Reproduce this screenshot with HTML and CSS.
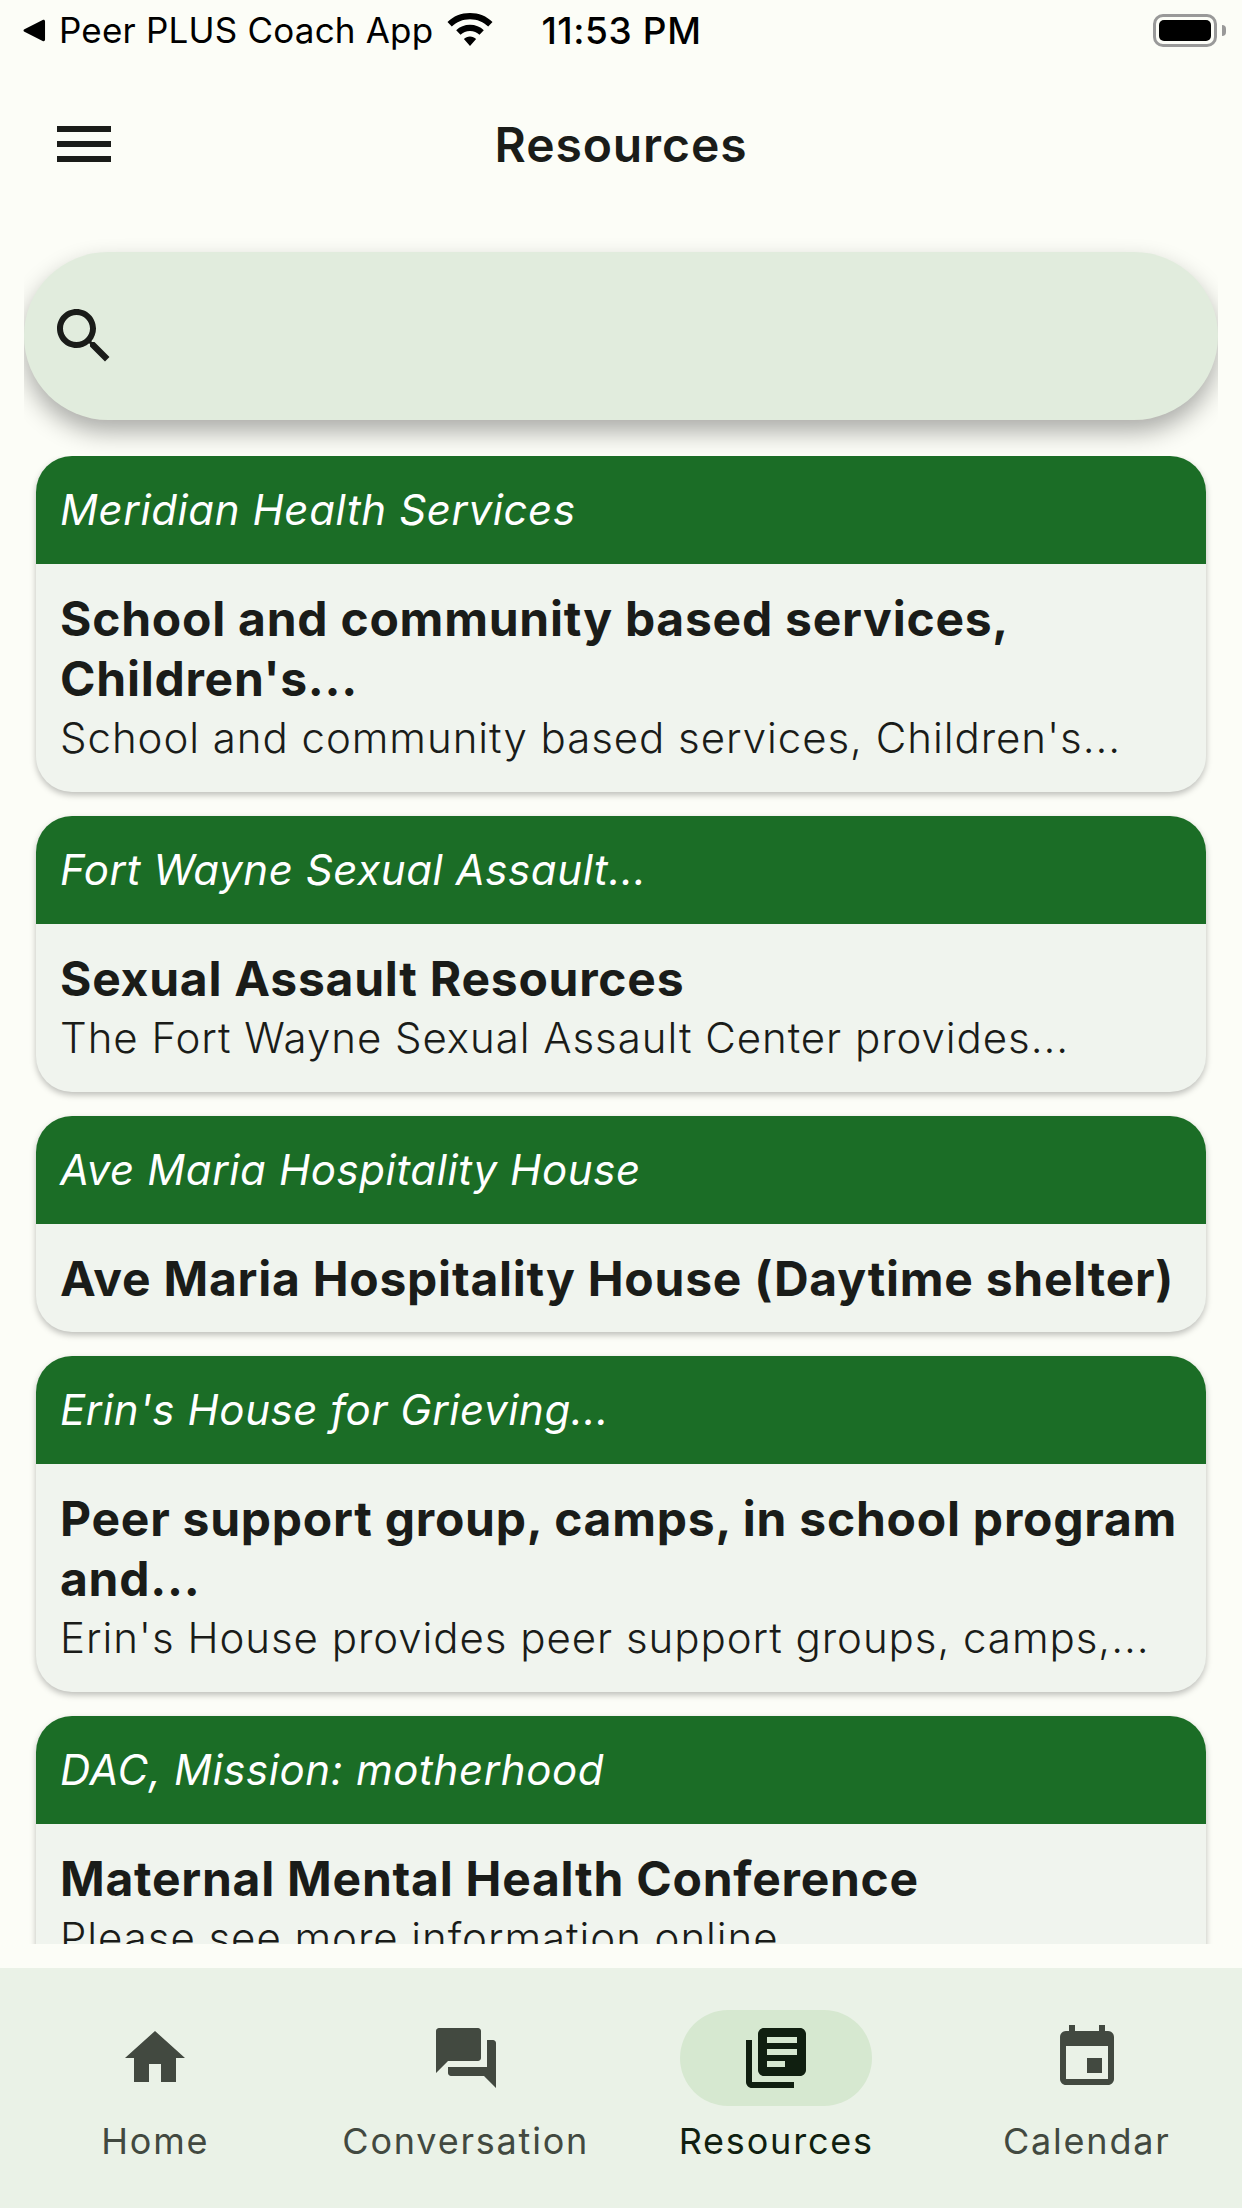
FILE: index.html
```html
<!DOCTYPE html>
<html lang="en">
<head>
  <meta charset="UTF-8">
  <meta name="viewport" content="width=device-width, initial-scale=1.0">
  <title>Resources - Peer PLUS Coach</title>
  <link rel="stylesheet" href="styles.css">
</head>
<body>
  <div class="status-bar">
    <svg class="status-back" viewBox="0 0 24 24"><path d="M23 2.500v19c0 1.500-1.300 2.200-2.500 1.500L1.500 13.300c-1.300-.7-1.300-1.900 0-2.600L20.500 1c1.200-.7 2.500 0 2.500 1.500z"/></svg>
    <span class="status-app">Peer PLUS Coach App</span>
    <svg class="status-wifi" viewBox="0 0 46 33"><path d="M23 0C14.200 0 6.300 3.300.5 8.900l4.300 4.700C9.500 9 15.900 6.300 23 6.300s13.500 2.700 18.200 7.300l4.300-4.700C39.700 3.300 31.800 0 23 0zM23 11.800c-5.300 0-10.200 2-13.800 5.400l4.300 4.600c2.500-2.400 5.800-3.800 9.500-3.800s7 1.400 9.500 3.800l4.300-4.600c-3.600-3.400-8.500-5.400-13.800-5.400zM23 23.500c-2.400 0-4.500.9-6.100 2.400L23 33l6.100-7.100c-1.600-1.500-3.700-2.400-6.100-2.400z"/></svg>
    <span class="status-time">11:53 PM</span>
    <div class="status-battery">
      <div class="status-battery-body"><div class="status-battery-fill"></div></div>
      <div class="status-battery-nub"></div>
    </div>
  </div>

  <header class="app-bar">
    <svg class="icon menu-icon" viewBox="0 0 24 24"><path d="M3 18h18v-2H3v2zm0-5h18v-2H3v2zm0-7v2h18V6H3z"/></svg>
    <h1>Resources</h1>
  </header>

  <div class="search-wrap">
    <div class="search-bar">
      <svg class="icon" viewBox="0 0 24 24"><path d="M15.500 14h-.79l-.28-.27C15.410 12.590 16 11.110 16 9.500 16 5.910 13.090 3 9.500 3S3 5.910 3 9.500 5.910 16 9.500 16c1.610 0 3.090-.59 4.230-1.570l.27.28v.79l5 4.990L20.490 19l-4.990-5zm-6 0C7.010 14 5 11.990 5 9.500S7.010 5 9.500 5 14 7.010 14 9.500 11.990 14 9.500 14z"/></svg>
    </div>
  </div>

  <main class="list">
    <article class="card">
      <div class="card-head">Meridian Health Services</div>
      <div class="card-body">
        <h2>School and community based services, Children's...</h2>
        <p>School and community based services, Children's...</p>
      </div>
    </article>
    <article class="card">
      <div class="card-head">Fort Wayne Sexual Assault...</div>
      <div class="card-body">
        <h2>Sexual Assault Resources</h2>
        <p>The Fort Wayne Sexual Assault Center provides...</p>
      </div>
    </article>
    <article class="card">
      <div class="card-head">Ave Maria Hospitality House</div>
      <div class="card-body">
        <h2>Ave Maria Hospitality House (Daytime shelter)</h2>
      </div>
    </article>
    <article class="card">
      <div class="card-head">Erin's House for Grieving...</div>
      <div class="card-body">
        <h2>Peer support group, camps, in school program and...</h2>
        <p>Erin's House provides peer support groups, camps,...</p>
      </div>
    </article>
    <article class="card">
      <div class="card-head">DAC, Mission: motherhood</div>
      <div class="card-body">
        <h2>Maternal Mental Health Conference</h2>
        <p>Please see more information online</p>
      </div>
    </article>
  </main>

  <nav class="bottom-nav">
    <a class="nav-item">
      <span class="nav-pill"><svg class="icon" viewBox="0 0 24 24"><path d="M10 20v-6h4v6h5v-8h3L12 3 2 12h3v8z"/></svg></span>
      <span class="nav-label">Home</span>
    </a>
    <a class="nav-item">
      <span class="nav-pill"><svg class="icon" viewBox="0 0 24 24"><path d="M21 6h-2v9H6v2c0 .55.45 1 1 1h11l4 4V7c0-.55-.45-1-1-1zm-4 6V3c0-.55-.45-1-1-1H3c-.55 0-1 .45-1 1v14l4-4h10c.55 0 1-.45 1-1z"/></svg></span>
      <span class="nav-label">Conversation</span>
    </a>
    <a class="nav-item active">
      <span class="nav-pill"><svg class="icon" viewBox="0 0 24 24"><path d="M4 6H2v14c0 1.100.9 2 2 2h14v-2H4V6zm16-4H8c-1.100 0-2 .9-2 2v12c0 1.100.9 2 2 2h12c1.100 0 2-.9 2-2V4c0-1.100-.9-2-2-2zm-1 9H9V9h10v2zm-4 4H9v-2h6v2zm4-8H9V5h10v2z"/></svg></span>
      <span class="nav-label">Resources</span>
    </a>
    <a class="nav-item">
      <span class="nav-pill"><svg class="icon" viewBox="0 0 24 24"><path d="M17 12h-5v5h5v-5zM16 1v2H8V1H6v2H5c-1.110 0-1.990.9-1.990 2L3 19c0 1.100.89 2 2 2h14c1.100 0 2-.9 2-2V5c0-1.100-.9-2-2-2h-1V1h-2zm3 18H5V8h14v11z"/></svg></span>
      <span class="nav-label">Calendar</span>
    </a>
  </nav>
</body>
</html>
```

FILE: styles.css
```css
html, body {
  height: 100%;
}
body {
  font-family: Inter, 'Noto Sans', sans-serif;
  background-color: #fcfdf7;
  color: #1a1c19;
  margin: 0;
  display: flex;
  flex-direction: column;
  overflow: hidden;
}
.icon {
  width: 72px;
  height: 72px;
  fill: currentColor;
  display: block;
}

/* status bar */
.status-bar {
  height: 60px;
  flex: none;
  display: flex;
  align-items: center;
  padding: 0 16px 0 23px;
  box-sizing: border-box;
  color: #000;
  font-size: 35px;
}
.status-back {
  width: 23px;
  height: 23px;
  flex: none;
}
.status-app {
  margin-left: 13px;
  letter-spacing: 0.2px;
  white-space: nowrap;
}
.status-wifi {
  width: 46px;
  height: 33px;
  margin: -2px 0 0 14px;
  flex: none;
}
.status-time {
  margin-left: 48px;
  font-size: 37px;
  font-weight: 500;
  letter-spacing: 0.6px;
  white-space: nowrap;
}
.status-battery {
  margin-left: auto;
  display: flex;
  align-items: center;
}
.status-battery-body {
  width: 64px;
  height: 33px;
  border: 3px solid #999;
  border-radius: 10px;
  box-sizing: border-box;
  padding: 3px;
  display: flex;
}
.status-battery-fill {
  flex: 1;
  background-color: #000;
  border-radius: 5px;
}
.status-battery-nub {
  width: 4px;
  height: 11px;
  margin-left: 5px;
  background-color: #999;
  border-radius: 0 4px 4px 0;
}

/* app bar */
.app-bar {
  height: 168px;
  flex: none;
  display: flex;
  align-items: center;
  justify-content: center;
  position: relative;
}
.menu-icon {
  position: absolute;
  left: 48px;
  top: 48px;
}
.app-bar h1 {
  margin: 0;
  font-size: 48px;
  font-weight: 600;
  letter-spacing: 0.9px;
}

/* search */
.search-wrap {
  flex: none;
  margin: 0 24px;
  padding: 24px 0 36px;
  overflow: hidden;
}
.search-bar {
  height: 168px;
  border-radius: 84px;
  background-color: #e1ecdd;
  box-shadow: 0 12px 24px rgba(0, 0, 0, 0.32);
  display: flex;
  align-items: center;
  padding-left: 24px;
}

/* cards */
.list {
  flex: 1;
  min-height: 0;
  overflow: hidden;
  padding: 0 36px;
  margin-bottom: 24px;
}
.card {
  border-radius: 36px;
  background-color: #f0f4ee;
  box-shadow: 0 3px 6px rgba(0, 0, 0, 0.25);
  overflow: hidden;
  margin-bottom: 24px;
}
.card-head {
  height: 108px;
  line-height: 108px;
  padding: 0 24px;
  background-color: #1b6d26;
  color: #fff;
  font-size: 42px;
  font-style: italic;
  letter-spacing: 0.6px;
}
.card-body {
  padding: 25px 24px 23px;
}
.card-body h2 {
  margin: 0;
  font-size: 48px;
  line-height: 60px;
  font-weight: 650;
  letter-spacing: 0.75px;
}
.card-body p {
  margin: -1px 0 1px;
  font-size: 42px;
  font-weight: 350;
  line-height: 60px;
  letter-spacing: 0.95px;
}

/* bottom nav */
.bottom-nav {
  height: 240px;
  flex: none;
  display: grid;
  grid-template-columns: repeat(4, 1fr);
  background-color: #eaf2e7;
  color: #424940;
}
.nav-item {
  display: flex;
  flex-direction: column;
  align-items: center;
  padding-top: 42px;
}
.nav-pill {
  width: 192px;
  height: 96px;
  border-radius: 48px;
  display: flex;
  align-items: center;
  justify-content: center;
}
.nav-label {
  margin-top: 11px;
  font-size: 36px;
  line-height: 48px;
  letter-spacing: 1.8px;
}
.active {
  color: #101f10;
}
.active .nav-pill {
  background-color: #d6e8d0;
}
```
